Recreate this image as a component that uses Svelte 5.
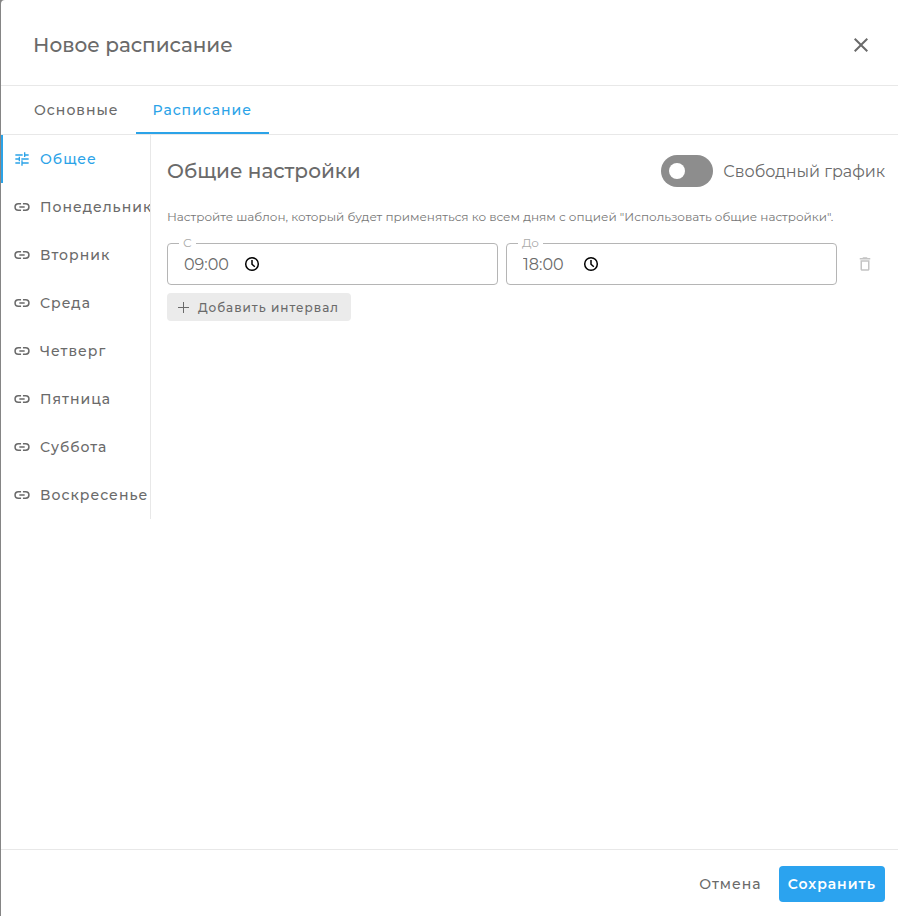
<script>
    let tab = 'schedule';
    let day = 'common';
    let free = false;
    let intervals = [{from: '09:00', to: '18:00'}];

    const tabs = [
        {id: 'main', title: 'Основные'},
        {id: 'schedule', title: 'Расписание'}
    ];

    const days = [
        {id: 'common', title: 'Общее'},
        {id: 'mon', title: 'Понедельник'},
        {id: 'tue', title: 'Вторник'},
        {id: 'wed', title: 'Среда'},
        {id: 'thu', title: 'Четверг'},
        {id: 'fri', title: 'Пятница'},
        {id: 'sat', title: 'Суббота'},
        {id: 'sun', title: 'Воскресенье'}
    ];

    function addInterval() {
        intervals = [...intervals, {from: '', to: ''}];
    }

    function removeInterval(index) {
        intervals = intervals.filter((_, i) => i !== index);
    }
</script>

<style>
    :global(body) {
        background: #858585;
    }

    .dialog {
        box-sizing: border-box;
        display: flex;
        flex-direction: column;
        min-height: 100vh;
        margin-left: 1px;
        border-top-left-radius: 4px;
        background: #fff;
        color: #6a6a6a;
        font-family: Montserrat, Inter, sans-serif;
        font-size: 14px;
    }

    button, input {
        font: inherit;
        color: inherit;
    }

    button {
        display: flex;
        align-items: center;
        padding: 0;
        border: 0;
        background: none;
        font-weight: 500;
        letter-spacing: 1px;
        cursor: pointer;
    }

    svg {
        flex: none;
        fill: currentColor;
    }

    h1, h2 {
        margin: 0;
        font-size: 20px;
        font-weight: 500;
        line-height: 32px;
    }

    .header {
        display: flex;
        align-items: center;
        justify-content: space-between;
        padding: 29px 25px 24px 32px;
        border-bottom: 1px solid #e8e8e8;
    }

    .tabs {
        display: flex;
        height: 48px;
        padding-left: 16px;
        border-bottom: 1px solid #e8e8e8;
    }

    .tab {
        padding: 0 17px;
        border-top: 2px solid transparent;
        border-bottom: 2px solid transparent;
    }

    .tab.active {
        border-bottom-color: #2ba3e8;
        color: #2ba3e8;
    }

    .body {
        display: flex;
        flex: 1;
        align-items: flex-start;
    }

    .days {
        flex: none;
        box-sizing: border-box;
        width: 150px;
        overflow: hidden;
        border-right: 1px solid #e8e8e8;
    }

    .day {
        gap: 10px;
        width: 100%;
        height: 48px;
        padding-left: 13px;
        white-space: nowrap;
    }

    .day.active {
        padding-left: 11px;
        border-left: 2px solid #2ba3e8;
        color: #2ba3e8;
    }

    .panel {
        flex: 1;
        min-width: 0;
        padding: 20px 13px 16px 16px;
    }

    .panel-head {
        display: flex;
        align-items: center;
        justify-content: space-between;
    }

    .switch {
        display: flex;
        align-items: center;
        gap: 10px;
        font-size: 16px;
        cursor: pointer;
    }

    .switch input {
        appearance: none;
        display: flex;
        align-items: center;
        box-sizing: border-box;
        width: 52px;
        height: 32px;
        margin: 0;
        padding: 0 8px;
        border-radius: 16px;
        background: #8d8d8d;
        cursor: pointer;
    }

    .switch input::before {
        content: '';
        width: 16px;
        height: 16px;
        border-radius: 50%;
        background: #fff;
    }

    .switch input:checked {
        justify-content: flex-end;
        background: #2ba3e8;
    }

    .hint {
        margin: 20px 0 16px;
        font-size: 12px;
        line-height: 20px;
        color: #777;
    }

    .interval {
        display: flex;
        align-items: center;
        gap: 8px;
        margin-bottom: 8px;
    }

    .field {
        position: relative;
        display: flex;
        flex: 1;
        align-items: center;
        box-sizing: border-box;
        min-width: 0;
        height: 42px;
        padding: 0 16px;
        border: 1px solid #b5b5b5;
        border-radius: 4px;
    }

    .field label {
        position: absolute;
        top: -9px;
        left: 11px;
        padding: 0 4px;
        background: #fff;
        font-size: 12px;
        line-height: 16px;
        color: #aaa;
    }

    .field input {
        width: 60px;
        padding: 0;
        border: 0;
        outline: none;
        background: none;
        font-size: 16px;
    }

    .clock {
        color: #000;
    }

    .remove {
        justify-content: center;
        width: 40px;
        height: 40px;
        color: #c4c4c4;
    }

    .add {
        gap: 8px;
        height: 28px;
        padding: 0 12px 0 10px;
        border-radius: 4px;
        background: #ebebeb;
        font-size: 12px;
    }

    .footer {
        display: flex;
        justify-content: flex-end;
        gap: 8px;
        padding: 16px 13px 14px;
        border-top: 1px solid #e8e8e8;
    }

    .footer button {
        height: 36px;
        padding: 0 9px;
        border-radius: 4px;
    }

    .footer .save {
        background: #2ba3ef;
        color: #fff;
        font-weight: 600;
    }
</style>

<div class="dialog" role="dialog" aria-labelledby="dialog-title">
    <header class="header">
        <h1 id="dialog-title">Новое расписание</h1>
        <button type="button" aria-label="Закрыть">
            <svg width="24" height="24" viewBox="0 0 24 24">
                <path d="M19 6.41 17.59 5 12 10.59 6.41 5 5 6.41 10.59 12 5 17.59 6.41 19 12 13.41 17.59 19 19 17.59 13.41 12z"/>
            </svg>
        </button>
    </header>

    <nav class="tabs">
        {#each tabs as item}
            <button type="button" class="tab" class:active={tab === item.id} on:click={() => tab = item.id}>{item.title}</button>
        {/each}
    </nav>

    <div class="body">
        <nav class="days">
            {#each days as item}
                <button type="button" class="day" class:active={day === item.id} on:click={() => day = item.id}>
                    <svg width="16" height="16" viewBox="0 0 24 24">
                        {#if item.id === 'common'}
                            <path d="M2 17v2h7v-2H2zM2 5v2h11V5H2zm11 17v-3h9v-2h-9v-3h-2v8h2zM7 8.500v2.500H2v2h5v2.500h2v-7H7zm15 4.500v-2H11v2h11zm-7-4h2V7h5V5h-5V2h-2v7z"/>
                        {:else}
                            <path d="M10.600 16.900H6.500a4.900 4.900 0 0 1 0-9.800h4.100M13.400 7.100h4.100a4.900 4.900 0 0 1 0 9.800h-4.100M8 12h8" fill="none" stroke="currentColor" stroke-width="2.300"/>
                        {/if}
                    </svg>
                    {item.title}
                </button>
            {/each}
        </nav>

        <main class="panel">
            <div class="panel-head">
                <h2>Общие настройки</h2>
                <label class="switch">
                    <input type="checkbox" role="switch" bind:checked={free}/>
                    Свободный график
                </label>
            </div>

            <p class="hint">Настройте шаблон, который будет применяться ко всем дням с опцией "Использовать общие настройки".</p>

            {#each intervals as interval, i}
                <div class="interval">
                    <div class="field">
                        <label for="from-{i}">С</label>
                        <input id="from-{i}" type="text" inputmode="numeric" bind:value={interval.from}/>
                        <svg class="clock" width="16" height="16" viewBox="0 0 16 16">
                            <path d="M8 1.7a6.3 6.3 0 1 0 0 12.6A6.3 6.3 0 0 0 8 1.7zM8 4v4.2l2.8 2.600" fill="none" stroke="currentColor" stroke-width="1.5"/>
                        </svg>
                    </div>
                    <div class="field">
                        <label for="to-{i}">До</label>
                        <input id="to-{i}" type="text" inputmode="numeric" bind:value={interval.to}/>
                        <svg class="clock" width="16" height="16" viewBox="0 0 16 16">
                            <path d="M8 1.7a6.3 6.3 0 1 0 0 12.6A6.3 6.3 0 0 0 8 1.7zM8 4v4.2l2.8 2.600" fill="none" stroke="currentColor" stroke-width="1.5"/>
                        </svg>
                    </div>
                    <button type="button" class="remove" aria-label="Удалить" disabled={intervals.length === 1} on:click={() => removeInterval(i)}>
                        <svg width="18" height="18" viewBox="0 0 24 24">
                            <path d="M6 19c0 1.1.9 2 2 2h8c1.1 0 2-.9 2-2V7H6v12zM8 9h8v10H8V9zm7.5-5-1-1h-5l-1 1H5v2h14V4z"/>
                        </svg>
                    </button>
                </div>
            {/each}

            <button type="button" class="add" on:click={addInterval}>
                <svg width="13" height="13" viewBox="0 0 13 13">
                    <path d="M6 1h1v5h5v1H7v5H6V7H1V6h5z"/>
                </svg>
                Добавить интервал
            </button>
        </main>
    </div>

    <footer class="footer">
        <button type="button">Отмена</button>
        <button type="button" class="save">Сохранить</button>
    </footer>
</div>
